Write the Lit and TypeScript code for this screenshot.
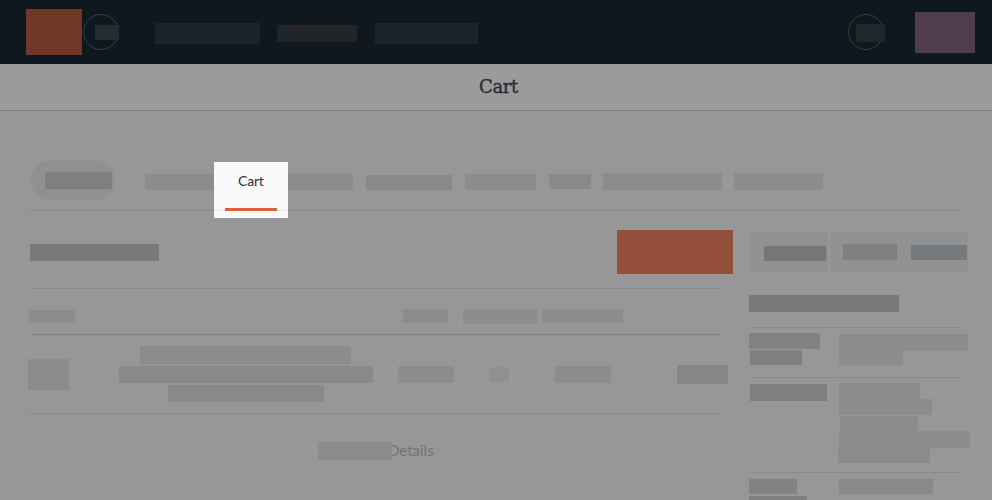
import { LitElement, html, css } from "lit";
import { customElement } from "lit/decorators.js";
import { styleMap } from "lit/directives/style-map.js";

// A placeholder block: space before it, space above it, size and tone.
type Block = [gap: number, top: number, width: number, height: number, tone?: string];

const block = ([gap, top, width, height, tone = "soft"]: Block) => html`<span
  class="block ${tone}"
  style=${styleMap({
    width: `${width}px`,
    height: `${height}px`,
    marginLeft: `${gap}px`,
    marginTop: `${top}px`,
  })}
></span>`;

const NAV: Block[] = [
  [36, 23, 105, 21, "nav-cool"],
  [17, 25, 80, 17, "nav-warm"],
  [18, 23, 103, 21, "nav-cool"],
];

const TABS: Block[] = [
  [30, 14, 69, 16, "soft"],
  [74, 13, 65, 17, "soft"],
  [13, 15, 86, 15, "mid"],
  [13, 14, 71, 16, "soft"],
  [13, 14, 42, 15, "mid"],
  [12, 13, 119, 17, "soft"],
  [12, 13, 89, 17, "soft"],
];

const COLUMNS: Block[] = [
  [29, 21, 46, 13],
  [328, 20, 45, 14],
  [15, 20, 74, 15, "pale"],
  [5, 20, 81, 14],
];

const ITEM_TEXT: Block[] = [
  [21, 0, 211, 18],
  [0, 2, 254, 17, "mid"],
  [49, 2, 156, 17, "mid"],
];

const ITEM_CELLS: Block[] = [
  [25, 31, 56, 17],
  [36, 32, 19, 15, "faint"],
  [46, 31, 56, 17],
  [66, 30, 51, 19, "firm"],
];

interface Detail {
  cls: string;
  labels: Block[];
  values: Block[];
}

const DETAILS: Detail[] = [
  {
    cls: "address",
    labels: [
      [0, 5, 71, 16, "label-light"],
      [1, 1, 52, 15, "label"],
    ],
    values: [
      [1, 6, 129, 17],
      [1, 0, 64, 14],
    ],
  },
  {
    cls: "summary",
    labels: [[1, 6, 77, 17, "label"]],
    values: [
      [1, 5, 81, 16],
      [1, 0, 93, 16],
      [2, 1, 78, 15],
      [1, 0, 131, 17],
      [0, 0, 92, 15, "green"],
    ],
  },
  {
    cls: "last",
    labels: [
      [0, 6, 48, 15, "label-light"],
      [0, 2, 58, 15, "label"],
    ],
    values: [[1, 6, 94, 15, "mid"]],
  },
];

@customElement("app-root")
export class AppRoot extends LitElement {
  static styles = css`
    :host {
      display: block;
      width: 992px;
      height: 500px;
      overflow: hidden;
      background: #979797;
      font-family: Lato, "Open Sans", sans-serif;
    }
    .block {
      display: block;
      flex: none;
    }
    .soft { background: #8c8c8c; }
    .mid { background: #898989; }
    .pale { background: #8d8d8d; }
    .faint { background: #909090; }
    .firm { background: #868686; }
    .green { background: #8a8c8a; }
    .label { background: #7d7f80; }
    .label-light { background: #818284; }
    .heading { background: #77797b; }
    .nav-cool { background: #1c232a; }
    .nav-warm { background: #222528; }
    .nav-chip { background: #1f272b; }
    .chip { background: #252c2e; }
    .logo { background: #713827; }
    .account { background: #513c4e; }
    .pill-text { background: #7f7f7f; }
    .action { background: #934f3a; }
    .seg-dark { background: #767678; }
    .seg-grey { background: #7f7f7f; }
    .seg-blue { background: #757a7d; }

    .topbar {
      display: flex;
      align-items: flex-start;
      height: 64px;
      background: #0f181e;
    }
    .ring {
      box-sizing: border-box;
      display: flex;
      align-items: flex-start;
      flex: none;
      width: 36px;
      height: 36px;
      margin: 14px 0 0 1px;
      border: 1px solid #3b4043;
      border-radius: 50%;
    }
    .ring.right {
      margin-left: auto;
      margin-right: 31px;
    }
    .account-slot {
      margin-right: 17px;
    }
    .title {
      height: 46px;
      border-bottom: 1px solid #7f7f7f;
      background: #9b9b9b;
      color: #2a2d2f;
      text-align: center;
      font: 18px/45px "DejaVu Serif", serif;
      letter-spacing: -0.35px;
      -webkit-text-stroke: 0.35px #2a2d2f;
      padding-left: 5px;
    }
    .tabs {
      position: relative;
      display: flex;
      align-items: flex-start;
      width: 929px;
      height: 50px;
      margin: 49px 0 0 31px;
      border-bottom: 1px solid #8b8b8b;
    }
    .pill {
      display: flex;
      align-items: flex-start;
      flex: none;
      width: 84px;
      height: 40px;
      border-radius: 20px;
      background: #909090;
    }
    /* Highlighted tab, raised above the row it belongs to */
    .spotlight {
      position: absolute;
      left: 183px;
      top: 2px;
      display: flex;
      flex-direction: column;
      width: 74px;
      height: 56px;
      background: #f9f9f9;
      color: #26333b;
      font-size: 14px;
      line-height: 18px;
      letter-spacing: -0.2px;
    }
    .spotlight .name {
      padding: 10px 0 0 24px;
    }
    .spotlight .mark {
      width: 52px;
      height: 3px;
      margin: 18px 0 0 11px;
      background: #d9623f;
    }
    .spotlight .rule {
      height: 1px;
      margin-top: -1px;
      background: linear-gradient(90deg, #e9e9e9 11px, transparent 11px 63px, #e9e9e9 63px);
    }
    .body {
      display: flex;
      align-items: flex-start;
    }
    .main {
      width: 749px;
      flex: none;
    }
    .row {
      display: flex;
      align-items: flex-start;
    }
    .line {
      width: 689px;
      height: 1px;
      margin-left: 31px;
      background: #8a8a8a;
    }
    .line.strong {
      background: #838383;
    }
    .toolbar { height: 77px; }
    .columns { height: 45px; }
    .item { height: 78px; }
    .copy {
      width: 254px;
      margin: 11px 0 0 50px;
    }
    .more {
      color: #747474;
      font-size: 15px;
      line-height: 20px;
    }
    .more .link {
      margin: 26px 0 0 -4px;
    }
    .more .block {
      position: relative;
      z-index: 1;
    }
    .aside {
      width: 243px;
      flex: none;
    }
    .segments {
      display: flex;
      gap: 3px;
      margin: 21px 0 0 2px;
    }
    .segment {
      display: flex;
      align-items: flex-start;
      flex: none;
      height: 40px;
      width: 77px;
      background: #919191;
    }
    .segment.wide { width: 137px; }
    .aside-title { height: 55px; }
    .detail {
      display: grid;
      grid-template-columns: 89px 1fr;
    }
    .aside .line {
      width: 209px;
      margin-left: 2px;
      background: #8b8b8b;
    }
    .address { height: 49px; }
    .summary { height: 94px; }
    .last { height: 27px; overflow: hidden; }
  `;

  render() {
    return html`
      <header class="topbar">
        ${block([26, 9, 56, 46, "logo"])}
        <span class="ring">${block([11, 10, 24, 15, "chip"])}</span>
        ${NAV.map(block)}
        <span class="ring right">${block([7, 9, 29, 18, "nav-chip"])}</span>
        <span class="row account-slot">${block([0, 12, 60, 41, "account"])}</span>
      </header>
      <div class="title">Cart</div>
      <nav class="tabs">
        <span class="pill">${block([14, 12, 67, 17, "pill-text"])}</span>
        ${TABS.map(block)}
        <div class="spotlight">
          <span class="name">Cart</span>
          <span class="mark"></span>
          <span class="rule"></span>
        </div>
      </nav>
      <div class="body">
        <section class="main">
          <div class="row toolbar">
            ${block([30, 33, 129, 17, "heading"])}${block([458, 19, 116, 44, "action"])}
          </div>
          <div class="line"></div>
          <div class="row columns">${COLUMNS.map(block)}</div>
          <div class="line strong"></div>
          <div class="row item">
            ${block([28, 24, 41, 31])}
            <div class="copy">${ITEM_TEXT.map(block)}</div>
            ${ITEM_CELLS.map(block)}
          </div>
          <div class="line"></div>
          <div class="row more">
            ${block([318, 28, 74, 18])}
            <span class="link">Details</span>
          </div>
        </section>
        <aside class="aside">
          <div class="segments">
            <span class="segment">${block([13, 14, 62, 15, "seg-dark"])}</span>
            <span class="segment wide">
              ${block([12, 12, 54, 16, "seg-grey"])}${block([14, 13, 56, 15, "seg-blue"])}
            </span>
          </div>
          <div class="row aside-title">${block([0, 23, 150, 17, "heading"])}</div>
          ${DETAILS.map(
            (d) => html`
              <div class="line"></div>
              <div class="detail ${d.cls}">
                <div>${d.labels.map(block)}</div>
                <div>${d.values.map(block)}</div>
              </div>
            `
          )}
        </aside>
      </div>
    `;
  }
}
